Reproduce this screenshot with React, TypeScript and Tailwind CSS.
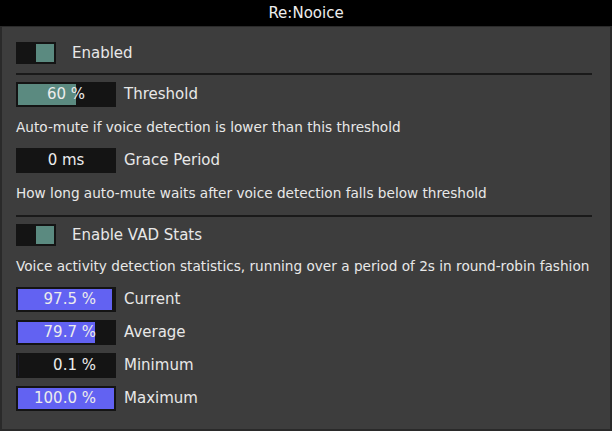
const font = { fontFamily: '"DejaVu Sans", Verdana, sans-serif' };

function Toggle(props: { label: string }) {
  return (
    <div className="flex items-center h-[22px] gap-[16px]">
      <div className="w-[40px] h-[22px] bg-[#141414] p-[2px] flex justify-end">
        <div className="w-[18px] h-[18px] bg-[#5b8a80]" />
      </div>
      <span className="text-[15px] leading-none text-[#e8e8e8]">{props.label}</span>
    </div>
  );
}

function Slider(props: {
  value: number;
  text: string;
  label: string;
  color: string;
  align?: "center" | "right";
}) {
  // fill is 96px wide at 100%; sub-pixel fills get faded instead of snapping to 1px
  const px = (96 * props.value) / 100;
  return (
    <div className="flex items-center h-[25px] gap-[8px]">
      <div className="relative w-[100px] h-[25px] bg-[#141414] p-[2px]">
        <div
          className="h-full"
          style={{
            width: px < 1 && px > 0 ? 1 : px,
            opacity: px < 1 ? px : 1,
            background: props.color,
          }}
        />
        <div
          className={
            props.align === "right"
              ? "absolute inset-0 flex items-center justify-end pr-[20px] text-[15px] leading-none text-[#ececec]"
              : "absolute inset-0 flex items-center justify-center text-[15px] leading-none text-[#ececec]"
          }
        >
          {props.text}
        </div>
      </div>
      <span className="text-[15px] leading-none text-[#e8e8e8]">{props.label}</span>
    </div>
  );
}

function Desc(props: { children: string }) {
  return (
    <div className="h-[25px] flex items-center text-[13.65px] leading-none text-[#e8e8e8] whitespace-nowrap">
      {props.children}
    </div>
  );
}

function Separator() {
  return <div className="h-[2px] mt-px -mb-px w-[576px] bg-[#1a1a1a]" />;
}

export default function App() {
  const blue = "#6262f2";
  return (
    <div className="w-[612px] h-[431px] bg-[#2a2a2a] flex flex-col px-[2px] pb-[2px]" style={font}>
      <div className="h-[26px] -mx-[2px] bg-black flex items-center justify-center text-[15px] leading-none text-[#ededed]">
        Re:Nooice
      </div>
      <div className="mt-px flex-1 bg-[#3d3d3d] pl-[14px] pt-[15px] flex flex-col gap-[8px]">
        <Toggle label="Enabled" />
        <Separator />
        <Slider value={60} text="60 %" label="Threshold" color="#5b8a80" />
        <Desc>Auto-mute if voice detection is lower than this threshold</Desc>
        <Slider value={0} text="0 ms" label="Grace Period" color="#5b8a80" />
        <Desc>How long auto-mute waits after voice detection falls below threshold</Desc>
        <Separator />
        <Toggle label="Enable VAD Stats" />
        <Desc>Voice activity detection statistics, running over a period of 2s in round-robin fashion</Desc>
        <Slider value={97.5} text="97.5 %" label="Current" color={blue} align="right" />
        <Slider value={79.7} text="79.7 %" label="Average" color={blue} align="right" />
        <Slider value={0.1} text="0.1 %" label="Minimum" color={blue} align="right" />
        <Slider value={100} text="100.0 %" label="Maximum" color={blue} align="right" />
      </div>
    </div>
  );
}
